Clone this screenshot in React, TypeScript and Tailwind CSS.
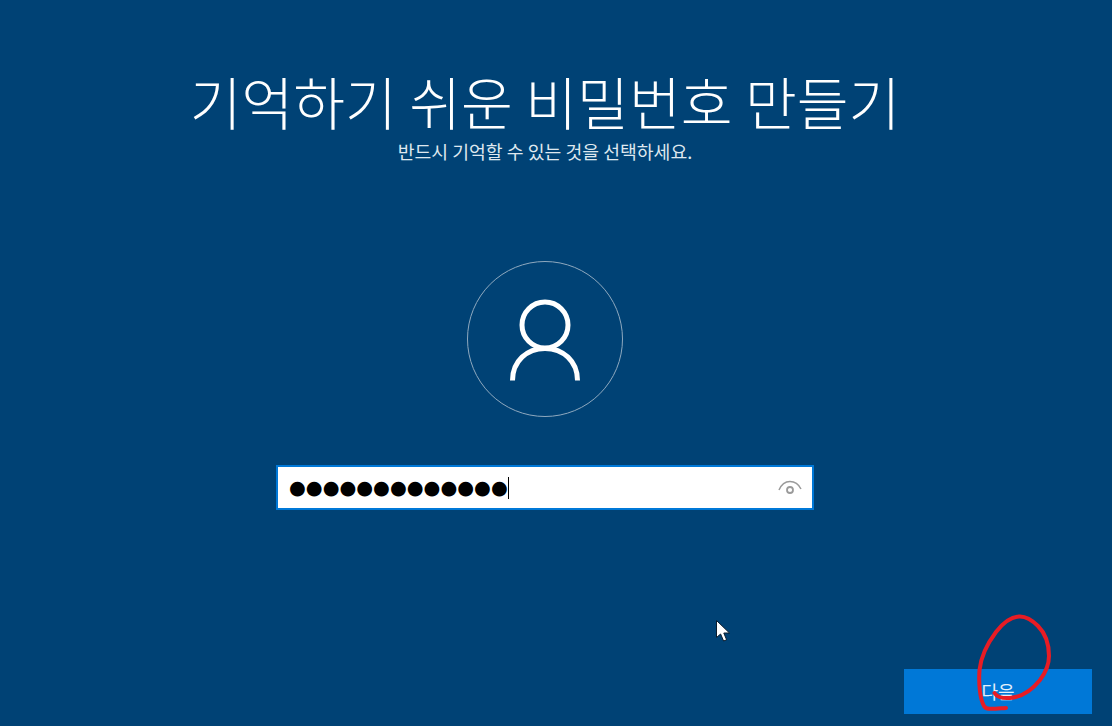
const KR = { fontFamily: '"Noto Sans CJK KR", "Noto Sans", sans-serif' };

function PersonIcon() {
  return (
    <svg width="80" height="90" viewBox="0 0 80 90" fill="none" stroke="#fff" strokeWidth="5">
      <circle cx="40" cy="30" r="23" />
      <path d="M7.5 85.5 C7.5 66 22 53.5 40 53.5 C58 53.5 72.5 66 72.5 85.5" />
    </svg>
  );
}

function EyeIcon() {
  return (
    <svg width="26" height="16" viewBox="0 0 26 16" fill="none" stroke="#9a9a9a" strokeWidth="1.5">
      <path d="M2 10 C5 3 9 1.5 13 1.5 C17 1.5 21 3 24 9" />
      <circle cx="13" cy="10" r="3" strokeWidth="1.8" />
    </svg>
  );
}

function Scribble() {
  return (
    <svg
      className="absolute left-[970px] top-[610px]"
      width="90"
      height="110"
      viewBox="970 610 90 110"
      fill="none"
      stroke="#e81c24"
      strokeWidth="4"
      strokeLinecap="round"
      strokeLinejoin="round"
    >
      <path d="M994.5 693 C997 697 1003 698.5 1010 698 C1022 697 1032 690 1040 680 C1046 672 1049 665 1049 656 C1049 644 1045 633 1038 626 C1032 620 1026 616 1019 616.5 C1011 617 1003 623 996 632 C987 644 981 656 979.5 670 C978.5 684 980 699 984 706 C986 710 992 709 1006 708" />
    </svg>
  );
}

function Cursor() {
  return (
    <svg className="absolute left-[714px] top-[619px]" width="20" height="24" viewBox="0 0 20 24">
      <path d="M2.5 1.5 V18.5 L6.6 15 L9.6 22 L12.6 20.8 L9.8 14 H15.5 Z" fill="#fff" stroke="#0b1c2c" strokeWidth="1" />
    </svg>
  );
}

export default function App() {
  return (
    <main className="relative flex h-[726px] w-[1112px] flex-col overflow-hidden bg-[#004275] pr-[20px] text-white" style={KR}>
      <div className="flex flex-col items-center pr-[2px] pt-[67px]">
        <h1 className="text-[56.3px] font-light leading-[68px]">기억하기 쉬운 비밀번호 만들기</h1>
        <p className="mt-[5px] text-[18.3px] leading-[22px] text-[#dfe8ef]">반드시 기억할 수 있는 것을 선택하세요.</p>

        <div className="mt-[99px] flex h-[156px] w-[156px] items-center justify-center rounded-full border border-[#8fa9bf] pt-[2px]">
          <PersonIcon />
        </div>

        <div className="mt-[48px] flex h-[45px] w-[538px] items-center justify-between border-2 border-[#0078d7] bg-white pl-[11px] pr-[9px]">
          <div className="flex items-center">
            <span className="text-[19.3px] leading-none text-black" style={{ fontFamily: '"DejaVu Sans", sans-serif' }}>
              ●●●●●●●●●●●●●
            </span>
            <span className="h-[22px] w-px bg-black" />
          </div>
          <EyeIcon />
        </div>
      </div>

      <div className="mt-auto flex justify-end pb-[12px]">
        <button className="h-[45px] w-[188px] bg-[#0078d7] text-[18px] text-[#e4f0fa]">다음</button>
      </div>

      <Scribble />
      <Cursor />
    </main>
  );
}
